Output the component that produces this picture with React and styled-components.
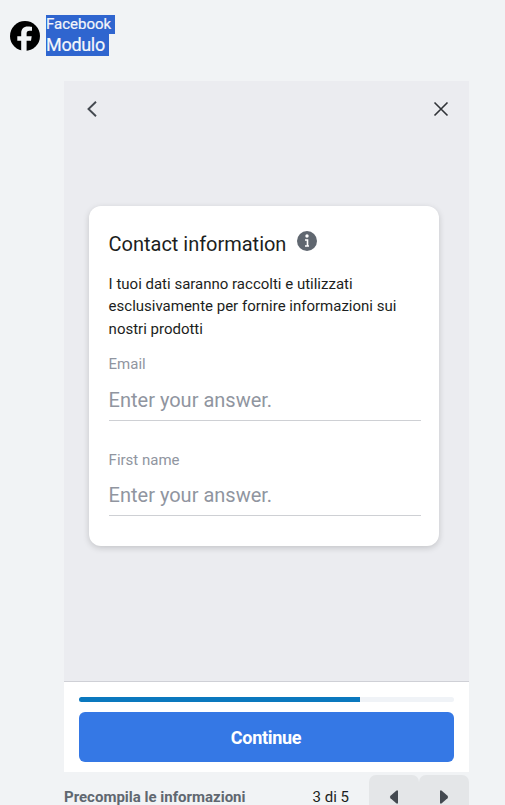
import React from "react";
import styled, { createGlobalStyle } from "styled-components";

const GlobalStyle = createGlobalStyle`
  *, *::before, *::after { box-sizing: border-box; }
  html, body { margin: 0; overflow: hidden; }
  body { background: #f1f3f5; font-family: Roboto, sans-serif; color: #1c1e21; }
`;

const Page = styled.main`
  height: 805px;
  overflow: hidden;
`;

const BrandHeader = styled.header`
  display: flex;
  align-items: flex-start;
  gap: 6px;
  height: 81px;
  padding: 15px 0 0 10px;
`;

const BrandLogo = styled.svg`
  display: block;
  width: 30px;
  height: 30px;
  margin-top: 6px;
`;

const BrandText = styled.div`
  display: flex;
  flex-direction: column;
  align-items: flex-start;
`;

const Highlight = styled.span`
  height: ${({ $height }) => $height}px;
  width: ${({ $width }) => $width}px;
  background: #2f65cf;
  color: #f4f6fa;
  font-size: ${({ $size }) => $size}px;
  line-height: ${({ $line }) => $line}px;
  letter-spacing: ${({ $spacing }) => $spacing || 0}px;
  -webkit-text-stroke: 0.2px #f4f6fa;
  white-space: nowrap;
`;

const Preview = styled.section`
  width: 405px;
  margin-left: 64px;
`;

const Screen = styled.div`
  height: 600px;
  background: #ebecf0;
`;

const NavBar = styled.nav`
  display: flex;
  justify-content: space-between;
  height: 125px;
  padding: 18px 18px 0 18px;
`;

const IconButton = styled.button`
  display: block;
  width: 20px;
  height: 20px;
  padding: 0;
  border: 0;
  background: none;

  svg { display: block; }
`;

const Card = styled.article`
  width: 350px;
  height: 340px;
  margin-left: 25px;
  padding: 24px 18px 0 19.6px;
  border-radius: 12px;
  background: #fff;
  box-shadow: 0 2px 6px rgba(0, 0, 0, 0.17);
`;

const TitleRow = styled.div`
  display: flex;
  gap: 10px;
  height: 43px;
`;

const Title = styled.h1`
  width: 178.4px;
  margin: 0;
  font-size: 20px;
  font-weight: 400;
  line-height: 28px;
  letter-spacing: -0.02px;
  white-space: nowrap;
`;

const InfoIcon = styled.svg`
  display: block;
  width: 20px;
  height: 20px;
  margin-top: 1px;
`;

const Description = styled.p`
  margin: 0;
  font-size: 15px;
  line-height: 22.4px;
`;

const Field = styled.label`
  display: flex;
  flex-direction: column;
  height: 95px;
  margin-top: ${({ $first }) => ($first ? 14 : 0)}px;
`;

const FieldLabel = styled.span`
  padding-top: ${({ $offset }) => $offset}px;
  font-size: 15px;
  line-height: 20px;
  color: #9095a0;
`;

const FieldInput = styled.input`
  width: 312px;
  height: 41px;
  margin-top: ${({ $gap }) => $gap}px;
  padding: 0;
  border: 0;
  border-bottom: 1px solid #ced0d4;
  border-radius: 0;
  outline: 0;
  background: transparent;
  font-family: inherit;
  font-size: 20px;

  &::placeholder { color: #9095a0; opacity: 1; }
`;

const ActionBar = styled.div`
  height: 91px;
  padding: 15px 15px 0;
  border-top: 1px solid #cfd0d6;
  background: #fff;
`;

const ProgressTrack = styled.div`
  height: 5px;
  border-radius: 3px;
  background: #f0f3f7;
  overflow: hidden;
`;

const ProgressFill = styled.div`
  width: 75%;
  height: 100%;
  background: #0a78be;
`;

const ContinueButton = styled.button`
  display: block;
  width: 375px;
  height: 50px;
  margin-top: 10px;
  padding: 0 1px 0 0;
  border: 0;
  border-radius: 6px;
  background: #3578e5;
  color: #fff;
  font-family: inherit;
  font-size: 18px;
  font-weight: 700;
  letter-spacing: -0.3px;
`;

const Pager = styled.footer`
  display: flex;
  height: 33px;
  padding-top: 3px;
  font-size: 15px;
  line-height: 20px;
`;

const StepName = styled.strong`
  flex: 1;
  padding-top: 12px;
  color: #606770;
  font-weight: 700;
`;

const StepCount = styled.span`
  padding: 12px 20px 0 0;
`;

const PagerButton = styled.button`
  display: flex;
  justify-content: center;
  width: 50px;
  height: 44px;
  padding: 15px 0 0;
  border: 0;
  border-radius: 7px;
  background: #e4e6e8;
`;

function Arrow({ left }) {
  return (
    <svg width="10" height="14" viewBox="0 0 10 14" fill="#444950">
      <path d={left ? "M9 .5v13H7.5L1.5 8.2Q.3 7 1.5 5.8L7.5 .5Z" : "M1 .5v13h1.5l6-5.3q1.2-1.2 0-2.4L2.5 .5Z"} />
    </svg>
  );
}

function FormField({ label, first, gap }) {
  return (
    <Field $first={first}>
      <FieldLabel $offset={first ? 0 : 1}>{label}</FieldLabel>
      <FieldInput placeholder="Enter your answer." $gap={gap} />
    </Field>
  );
}

export default function App() {
  return (
    <Page>
      <GlobalStyle />
      <BrandHeader>
        <BrandLogo viewBox="0 0 30 30" aria-label="Facebook">
          <circle cx="15" cy="15" r="15" fill="#000" />
          <path d="M11.2 30V19.8H7.3v-4.6h3.9v-2.8c0-4.4 2.4-6.9 6.6-6.9 2.2 0 4.2.4 4.2.4v3.8h-2.4c-2.3 0-3 1.2-3 2.8v2.7h5.1l-.7 4.6h-4.4V30Z" fill="#f1f3f5" />
        </BrandLogo>
        <BrandText>
          <Highlight $width={69} $height={19} $size={15} $line={18}>Facebook</Highlight>
          <Highlight $width={63} $height={22} $size={18} $line={22} $spacing={-0.3}>Modulo</Highlight>
        </BrandText>
      </BrandHeader>
      <Preview>
        <Screen>
          <NavBar>
            <IconButton aria-label="Back">
              <svg width="20" height="20" fill="none" stroke="#444950" strokeWidth="1.9">
                <path d="m14 2.8-7.5 7.2 7.5 7.2" />
              </svg>
            </IconButton>
            <IconButton aria-label="Close">
              <svg width="20" height="20" fill="none" stroke="#303338" strokeWidth="1.6">
                <path d="m3.5 3.5 13 13m0-13-13 13" />
              </svg>
            </IconButton>
          </NavBar>
          <Card>
            <TitleRow>
              <Title>Contact information</Title>
              <InfoIcon viewBox="0 0 20 20">
                <circle cx="10" cy="10" r="10" fill="#606770" />
                <circle cx="10" cy="5" r="1.7" fill="#fff" />
                <path d="M8 9h2.5v5.7M8 15h4" fill="none" stroke="#fff" strokeWidth="1.6" />
              </InfoIcon>
            </TitleRow>
            <Description>
              I tuoi dati saranno raccolti e utilizzati<br />
              esclusivamente per fornire informazioni sui<br />
              nostri prodotti
            </Description>
            <FormField label="Email" first gap={6} />
            <FormField label="First name" gap={5} />
          </Card>
        </Screen>
        <ActionBar>
          <ProgressTrack><ProgressFill /></ProgressTrack>
          <ContinueButton>Continue</ContinueButton>
        </ActionBar>
        <Pager>
          <StepName>Precompila le informazioni</StepName>
          <StepCount>3 di 5</StepCount>
          <PagerButton aria-label="Previous"><Arrow left /></PagerButton>
          <PagerButton aria-label="Next"><Arrow /></PagerButton>
        </Pager>
      </Preview>
    </Page>
  );
}
